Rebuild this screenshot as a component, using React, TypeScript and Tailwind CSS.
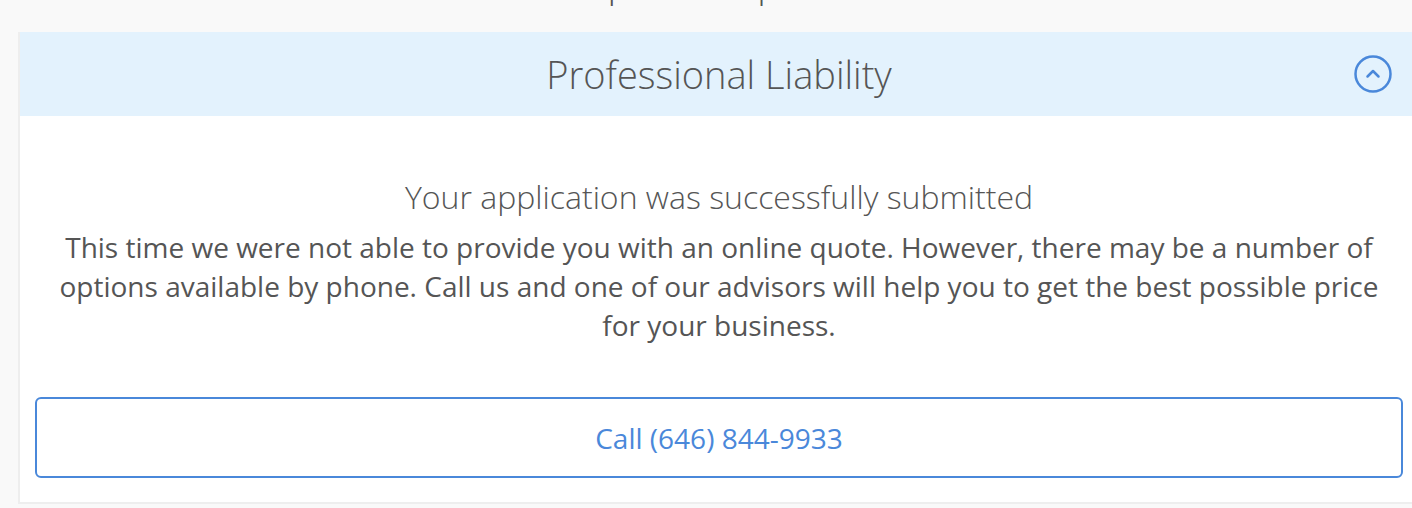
import React from 'react'

function ChevronCircle() {
  return (
    <svg width="40" height="40" viewBox="0 0 40 40" fill="none">
      <circle cx="20" cy="20" r="17.5" stroke="#4a88da" strokeWidth="2.5" />
      <path d="M14.5 22.5 L20 17 L25.5 22.5" stroke="#4a88da" strokeWidth="2.5" strokeLinecap="round" strokeLinejoin="round" />
    </svg>
  )
}

export default function App() {
  return (
    <div
      className="w-[1412px] h-[508px] overflow-hidden bg-[#f9f9f9]"
      style={{ fontFamily: '"Open Sans", sans-serif' }}
    >
      {/* Section title, mostly scrolled out of view */}
      <h2 className="mt-[-36px] h-[68px] text-center text-[38px] leading-[36px] font-light text-[#555]">
        Requested quotes
      </h2>

      {/* Quote card */}
      <div className="ml-[18px] w-[1402px] border-2 border-t-0 border-[#eeeeee] bg-white">
        <div className="relative flex h-[84px] items-center justify-center bg-[#e3f2fd]">
          <h3 className="text-[38px] font-light text-[#555]">Professional Liability</h3>
          <button className="absolute right-[25px] top-[22px]">
            <ChevronCircle />
          </button>
        </div>

        <div className="px-[15px] pb-[24px] pt-[60px]">
          <div className="text-center text-[#555]">
            <p className="text-[32px] font-light leading-[42px]">Your application was successfully submitted</p>
            <p className="mt-[10px] px-[14px] text-[28px] leading-[39px]">
              This time we were not able to provide you with an online quote. However, there may be a number of options
              available by phone. Call us and one of our advisors will help you to get the best possible price for your
              business.
            </p>
          </div>
          <button className="mt-[52px] flex h-[81px] w-full items-center justify-center rounded-[6px] border-2 border-[#4a88da] bg-white text-[28px] text-[#4a88da]">
            Call (646) 844-9933
          </button>
        </div>
      </div>
    </div>
  )
}
